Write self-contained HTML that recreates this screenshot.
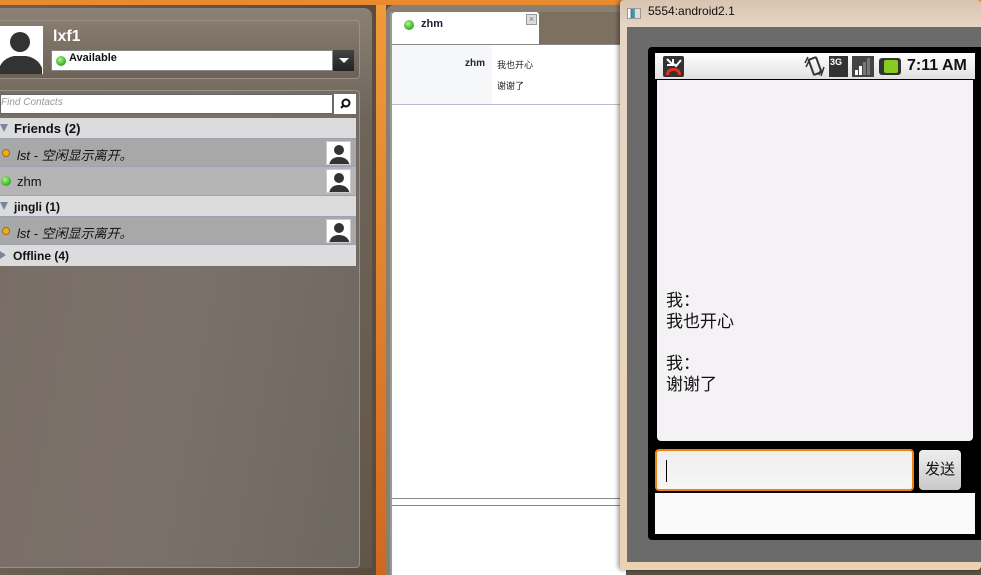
<!DOCTYPE html>
<html><head><meta charset="utf-8"><style>
*{margin:0;padding:0;box-sizing:border-box}
body{width:981px;height:575px;overflow:hidden;position:relative;background:#5c5044;font-family:"Liberation Sans","Noto Sans CJK SC",sans-serif}
.a{position:absolute}
.av{background:#fff;border:1px solid #ccc;overflow:hidden}
.row{position:absolute;left:0;width:356px;font-size:13px;color:#111}
.hdr{background:#dcdcdc;font-weight:bold;border-bottom:1px solid #9aa4b0}
.ct{background:#a8a8a8;border-bottom:1px solid #9aa4b0}
.tri{position:absolute;left:0;top:6px;width:0;height:0;border-left:4px solid transparent;border-right:4px solid transparent;border-top:8px solid #7a86a0}
.clk{position:absolute;left:2px;width:8px;height:8px;border-radius:50%;background:#e8b020;border:1px solid #a07010}
.grn{position:absolute;width:10px;height:10px;border-radius:50%;background:radial-gradient(circle at 40% 35%,#b8f090,#3cb82c 60%,#2a8a1e)}
</style></head><body>
<div class="a" style="left:0;top:0;width:981px;height:5px;background:#e88a30"></div>
<div class="a" style="left:0;top:5px;width:376px;height:570px;background:linear-gradient(90deg,#6a6054,#5a4c3e)"></div>
<div class="a" style="left:0;top:8px;width:372px;height:560px;background:linear-gradient(180deg,#8a8074,#6e645a 20%,#625648);border-radius:0 8px 0 0"></div>
<div class="a" style="left:376px;top:5px;width:10px;height:570px;background:linear-gradient(180deg,#f09a3a,#d06820)"></div>
<div class="a" style="left:0;top:20px;width:360px;height:59px;background:linear-gradient(180deg,#877c70,#6d6256);border:1px solid #9a9086;border-left:none;border-radius:0 4px 4px 0"></div>
<div class="a av" style="left:0;top:26px;width:43px;height:48px;border:none">
<svg width="43" height="48"><circle cx="20" cy="16" r="10" fill="#333"/><path d="M0 48 L0 40 Q4 32 14 30 L26 30 Q38 32 42 42 L42 48Z" fill="#333"/></svg></div>
<div class="a" style="left:53px;top:28px;font-size:16px;font-weight:bold;color:#fff">lxf1</div>
<div class="a" style="left:51px;top:50px;width:282px;height:21px;background:#fff;border:1px solid #888"></div>
<div class="grn" style="left:56px;top:56px"></div>
<div class="a" style="left:69px;top:52px;font-size:11px;font-weight:bold;color:#111">Available</div>
<div class="a" style="left:333px;top:50px;width:21px;height:21px;background:linear-gradient(#444,#222)"><div class="a" style="left:6px;top:8px;border-left:5px solid transparent;border-right:5px solid transparent;border-top:5px solid #fff"></div></div>
<div class="a" style="left:0;top:90px;width:360px;height:478px;background:linear-gradient(100deg,#786e66,#7a716a 50%,#6e6760);border:1px solid #9a9086;border-left:none;border-radius:0 4px 4px 0"></div>
<div class="a" style="left:0;top:94px;width:333px;height:20px;background:#fff;border:1px solid #666;font-size:10px;font-style:italic;color:#999;padding:2px 0 0 0">Find Contacts</div>
<div class="a" style="left:334px;top:94px;width:22px;height:20px;background:#fff"><svg width="22" height="20"><circle cx="12" cy="9" r="3.5" fill="none" stroke="#111" stroke-width="2"/><path d="M9.5 11.5 L7 14" stroke="#111" stroke-width="2"/></svg></div>
<div class="row hdr" style="top:118px;height:21px"><div class="tri"></div><span class="a" style="left:14px;top:3px">Friends (2)</span></div>
<div class="row ct" style="top:139px;height:28px"><div class="clk" style="top:10px"></div><span class="a" style="left:17px;top:6px;font-style:italic">lst - 空闲显示离开。</span><div class="a av" style="left:326px;top:2px;width:25px;height:24px"><svg width="25" height="24"><circle cx="12" cy="8" r="5" fill="#333"/><path d="M2 24 Q3 15 12 15 Q21 15 23 24Z" fill="#333"/></svg></div></div>
<div class="row ct" style="top:167px;height:29px;background:#b5b5b5"><div class="grn" style="left:1px;top:9px"></div><span class="a" style="left:17px;top:7px">zhm</span><div class="a av" style="left:326px;top:2px;width:25px;height:24px"><svg width="25" height="24"><circle cx="12" cy="8" r="5" fill="#333"/><path d="M2 24 Q3 15 12 15 Q21 15 23 24Z" fill="#333"/></svg></div></div>
<div class="row hdr" style="top:196px;height:21px"><div class="tri"></div><span class="a" style="left:14px;top:4px;font-size:12px">jingli (1)</span></div>
<div class="row ct" style="top:217px;height:28px"><div class="clk" style="top:10px"></div><span class="a" style="left:17px;top:6px;font-style:italic">lst - 空闲显示离开。</span><div class="a av" style="left:326px;top:2px;width:25px;height:24px"><svg width="25" height="24"><circle cx="12" cy="8" r="5" fill="#333"/><path d="M2 24 Q3 15 12 15 Q21 15 23 24Z" fill="#333"/></svg></div></div>
<div class="row hdr" style="top:245px;height:21px;border-bottom:none"><div class="a" style="left:0;top:6px;border-top:4px solid transparent;border-bottom:4px solid transparent;border-left:6px solid #7a86a0"></div><span class="a" style="left:13px;top:4px;font-size:12px">Offline (4)</span></div>
<div class="a" style="left:386px;top:5px;width:240px;height:570px;background:#8a7e70;border-radius:8px 0 0 0"></div>
<div class="a" style="left:390px;top:12px;width:236px;height:563px;background:#fff;border-left:2px solid #999"></div>
<div class="a" style="left:392px;top:12px;width:234px;height:32px;background:#7e7060"></div>
<div class="a" style="left:392px;top:12px;width:147px;height:33px;background:#fff;border-radius:3px 3px 0 0"></div>
<div class="grn" style="left:404px;top:20px"></div>
<div class="a" style="left:421px;top:18px;font-size:11px;font-weight:bold;color:#223">zhm</div>
<div class="a" style="left:526px;top:14px;width:11px;height:11px;border:1px solid #999;background:#ddd;font-size:9px;line-height:9px;text-align:center;color:#777">×</div>
<div class="a" style="left:392px;top:44px;width:234px;height:1px;background:#888"></div>
<div class="a" style="left:392px;top:45px;width:100px;height:59px;background:#f6f7f9"></div>
<div class="a" style="left:465px;top:58px;font-size:10px;font-weight:bold;color:#223">zhm</div>
<div class="a" style="left:497px;top:58px;font-size:9px;color:#222">我也开心</div>
<div class="a" style="left:497px;top:79px;font-size:9px;color:#222">谢谢了</div>
<div class="a" style="left:392px;top:104px;width:234px;height:1px;background:#bbc"></div>
<div class="a" style="left:392px;top:498px;width:234px;height:1px;background:#888"></div>
<div class="a" style="left:392px;top:505px;width:234px;height:1px;background:#888"></div>
<div class="a" style="left:620px;top:0;width:361px;height:570px;background:linear-gradient(180deg,#d8c4b0,#e8d6c4 30px,#ecd2b4);border-radius:4px;box-shadow:-2px 0 4px rgba(0,0,0,.4)"></div>
<div class="a" style="left:627px;top:8px;width:14px;height:11px;background:linear-gradient(90deg,#fff 20%,#3a7a9a 20%,#5aa 60%,#ddd 60%);border:1px solid #999"></div>
<div class="a" style="left:648px;top:4px;font-size:12px;color:#111">5554:android2.1</div>
<div class="a" style="left:627px;top:27px;width:354px;height:535px;background:#6b6b6b"></div>
<div class="a" style="left:648px;top:47px;width:333px;height:493px;background:#000;border-radius:4px 0 0 4px"></div>
<div class="a" style="left:655px;top:53px;width:320px;height:26px;background:linear-gradient(#fff,#e0e0e0)"></div>
<div class="a" style="left:663px;top:56px;width:21px;height:21px;background:#333;border-radius:2px"><svg width="21" height="21"><path d="M4 3 L10 9 M4 9 L10 9 L10 3" stroke="#fff" stroke-width="2" fill="none"/><path d="M11 8 L13 10 L18 4" stroke="#fff" stroke-width="2" fill="none"/><path d="M3 19 Q3 12 10.5 12 Q18 12 18 19 L15 19 Q15 15 10.5 15 Q6 15 6 19Z" fill="#e83020"/></svg></div>
<svg class="a" style="left:803px;top:55px" width="22" height="23"><path d="M2 8 L5 2 M3 12 L7 4" stroke="#333" stroke-width="1.5"/><rect x="8" y="3" width="8" height="16" rx="1" transform="rotate(-20 12 11)" fill="none" stroke="#333" stroke-width="2"/><path d="M18 14 L16 20 M21 12 L18 21" stroke="#333" stroke-width="1.5"/></svg>
<div class="a" style="left:829px;top:56px;width:19px;height:21px;background:#333;color:#fff;font-size:9px;font-weight:bold;padding:1px">3G</div>
<svg class="a" style="left:852px;top:56px" width="22" height="21"><rect width="22" height="21" fill="#444"/><rect x="3" y="14" width="3" height="5" fill="#fff"/><rect x="7" y="10" width="3" height="9" fill="#fff"/><rect x="11" y="6" width="3" height="13" fill="#777"/><rect x="15" y="2" width="3" height="17" fill="#777"/></svg>
<div class="a" style="left:879px;top:58px;width:22px;height:17px;background:#333;border-radius:3px"><div class="a" style="left:5px;top:2px;width:14px;height:13px;background:#8c2;border-radius:2px"></div></div>
<div class="a" style="left:907px;top:57px;font-size:16px;font-weight:bold;color:#111">7:11 AM</div>
<div class="a" style="left:657px;top:80px;width:316px;height:361px;background:#f4f2f4;border-radius:0 0 4px 4px"></div>
<div class="a" style="left:666px;top:290px;font-size:17px;line-height:21px;color:#111">我：<br>我也开心<br><br>我：<br>谢谢了</div>
<div class="a" style="left:655px;top:449px;width:259px;height:42px;background:linear-gradient(#eee,#f6f6f6);border:2px solid #f08010;border-radius:4px"><div class="a" style="left:9px;top:9px;width:1px;height:22px;background:#000"></div></div>
<div class="a" style="left:919px;top:450px;width:42px;height:40px;background:linear-gradient(#eee,#c8c8c8);border-radius:4px;font-size:15px;text-align:center;line-height:40px;color:#111">发送</div>
<div class="a" style="left:655px;top:493px;width:320px;height:41px;background:#fafafa"></div>
</body></html>
